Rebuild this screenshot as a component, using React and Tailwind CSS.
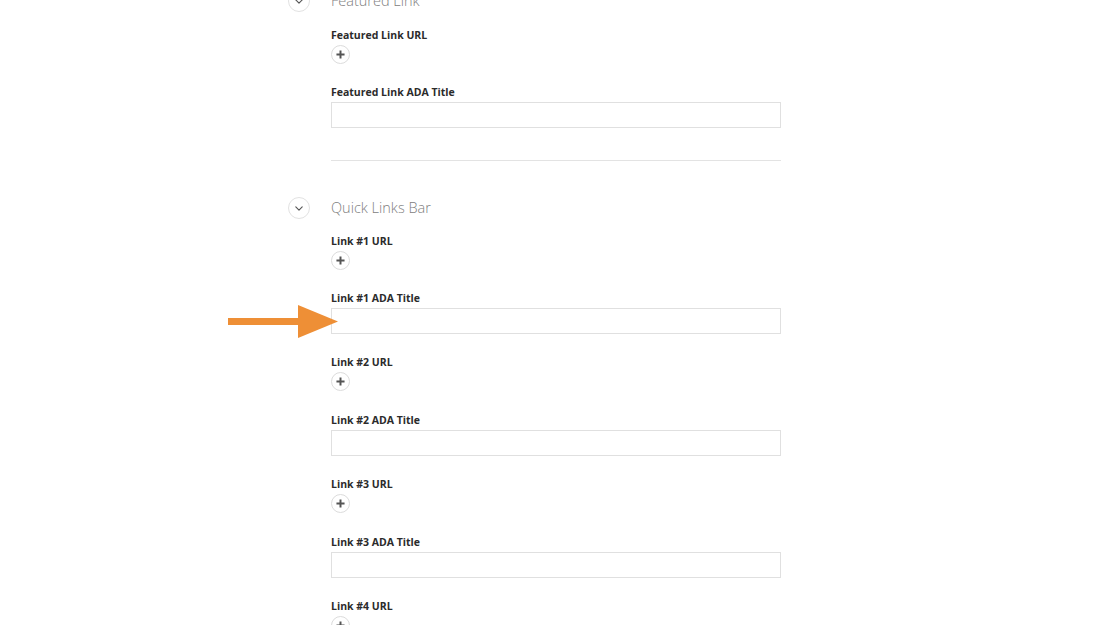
import React from 'react';

const font = { fontFamily: '"Open Sans", "Noto Sans", sans-serif' };

function Chevron() {
    return (
        <div className="w-[22px] h-[22px] rounded-full border border-[#e2e2e2] bg-white flex items-center justify-center shrink-0">
            <svg viewBox="0 0 10 6" className="w-[8px] h-[5px]" fill="none" stroke="#555" strokeWidth={1.4} strokeLinecap="round" strokeLinejoin="round">
                <path d="M1 1l4 4 4-4" />
            </svg>
        </div>
    );
}

function PlusButton() {
    return (
        <button className="w-[19px] h-[19px] rounded-full border border-[#dcdcdc] bg-white flex items-center justify-center">
            <svg viewBox="0 0 10 10" className="w-[9px] h-[9px]" fill="none" stroke="#555" strokeWidth={2.2}>
                <path d="M5 0.5v9M0.5 5h9" />
            </svg>
        </button>
    );
}

function UrlField({ label, tight }) {
    return (
        <div className={tight ? 'mb-[20px]' : 'mb-[21px]'}>
            <div className="text-[10.5px] leading-[16px] font-bold text-[#2b2b2b]">{label}</div>
            <div className="mt-[2px]">
                <PlusButton />
            </div>
        </div>
    );
}

function TitleField({ label }) {
    return (
        <div className="mb-[20px]">
            <div className="text-[10.5px] leading-[16px] font-bold text-[#2b2b2b]">{label}</div>
            <input className="mt-[2px] block w-[450px] h-[26px] border border-[#e0e0e0] bg-white outline-none" />
        </div>
    );
}

function SectionHeader({ title }) {
    return (
        <div className="flex items-center h-[24px] -ml-[43px]">
            <Chevron />
            <h2 className="ml-[21px] text-[14.5px] font-light text-[#808080] leading-[24px]">{title}</h2>
        </div>
    );
}

export default function App() {
    return (
        <div className="min-h-screen bg-white overflow-hidden relative" style={font}>
            <div className="ml-[331px] w-[450px] -mt-[11px]">
                <SectionHeader title="Featured Link" />
                <div className="mt-[14px]">
                    <UrlField label="Featured Link URL" tight />
                    <TitleField label="Featured Link ADA Title" />
                </div>
                <div className="mt-[32px] border-t border-[#e3e3e3]" />
                <div className="mt-[35px]">
                    <SectionHeader title="Quick Links Bar" />
                </div>
                <div className="mt-[13px]">
                    <UrlField label="Link #1 URL" tight />
                    <TitleField label="Link #1 ADA Title" />
                    <UrlField label="Link #2 URL" />
                    <TitleField label="Link #2 ADA Title" />
                    <UrlField label="Link #3 URL" />
                    <TitleField label="Link #3 ADA Title" />
                    <UrlField label="Link #4 URL" />
                </div>
            </div>

            <svg className="absolute left-[228px] top-[305px]" width="110" height="33" viewBox="0 0 110 33">
                <rect x="0" y="13" width="74" height="7" fill="#EE8F36" />
                <polygon points="70,0 110,16.5 70,33" fill="#EE8F36" />
            </svg>
        </div>
    );
}
